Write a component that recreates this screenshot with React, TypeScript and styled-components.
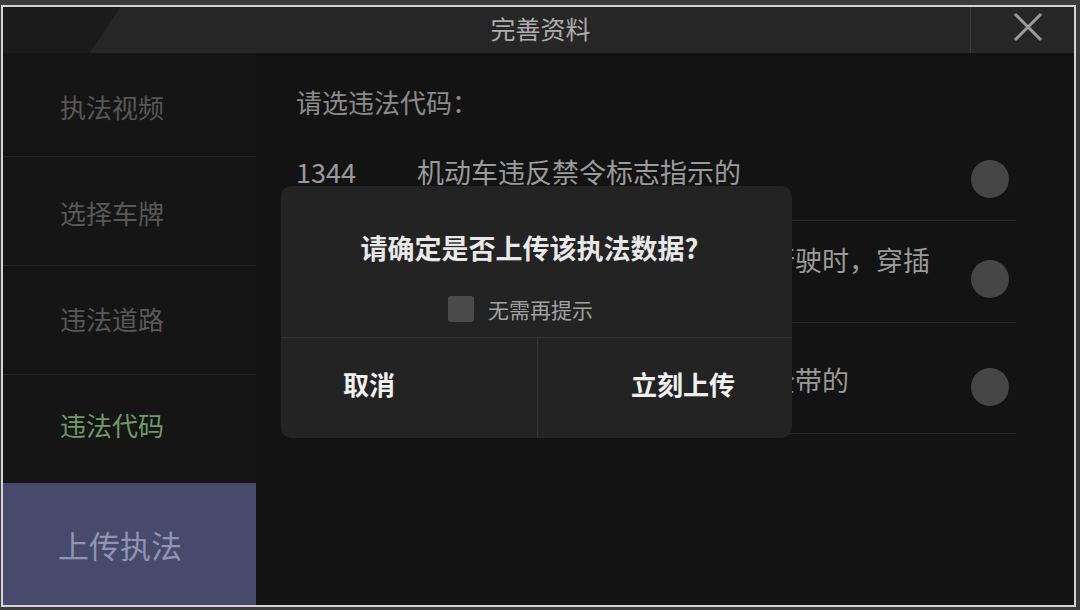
import React from "react";
import styled, { createGlobalStyle } from "styled-components";

const Global = createGlobalStyle`
  html, body { margin: 0; padding: 0; background: #3b3b3b; }
  body { font-family: "Noto Sans CJK SC", "Noto Sans", sans-serif; }
  * { box-sizing: border-box; }
`;

const Frame = styled.div`
  position: relative;
  margin: 5px 0 0 1px;
  width: 1075px;
  height: 602px;
  border: 2px solid #d4d4d4;
  background: #131313;
  display: flex;
  flex-direction: column;
  overflow: hidden;
`;

const Header = styled.header`
  height: 46px;
  flex: none;
  display: grid;
  grid-template-columns: 117px 1fr 104px;
  background: #262626;
`;

const Wedge = styled.div`
  background: #1b1b1b;
  clip-path: polygon(0 0, 100% 0, 74% 100%, 0 100%);
`;

const Title = styled.h1`
  margin: 0;
  padding: 0 9px 4px 0;
  display: flex;
  align-items: center;
  justify-content: center;
  font-size: 25px;
  font-weight: 400;
  color: #acacac;
`;

const Close = styled.button`
  border: 0;
  border-left: 1px solid #3a3a3a;
  background: transparent;
  padding: 0 0 6px 10px;
  display: flex;
  align-items: center;
  justify-content: center;
  cursor: pointer;
`;

const Body = styled.div`
  flex: 1;
  display: flex;
  min-height: 0;
`;

const Sidebar = styled.nav`
  width: 253px;
  flex: none;
  display: flex;
  flex-direction: column;
  background: #151515;
`;

const NavItem = styled.div<{ $h?: number; $active?: boolean; $primary?: boolean; $line?: boolean; $shift?: number }>`
  height: ${(p) => (p.$h ? `${p.$h}px` : "auto")};
  flex: ${(p) => (p.$h ? "none" : "1")};
  display: flex;
  align-items: center;
  padding-left: ${(p) => (p.$primary ? 55 : 57)}px;
  padding-top: ${(p) => Math.max(0, p.$shift ?? 0)}px;
  padding-bottom: ${(p) => Math.max(0, -(p.$shift ?? 0))}px;
  font-size: ${(p) => (p.$primary ? 31 : 26)}px;
  color: ${(p) => (p.$primary ? "#9094b0" : p.$active ? "#6d9a68" : "#585858")};
  background: ${(p) => (p.$primary ? "#474a6b" : "transparent")};
  border-bottom: ${(p) => (p.$line ? "1px solid #262626" : "0")};
`;

const Content = styled.main`
  flex: 1;
  padding: 33px 58px 0 40px;
`;

const Prompt = styled.div`
  font-size: 26px;
  line-height: 32px;
  color: #8a8a8a;
  margin-bottom: 6px;
`;

const Row = styled.div<{ $h: number; $pt: number }>`
  height: ${(p) => p.$h}px;
  display: flex;
  align-items: center;
  padding-top: ${(p) => p.$pt}px;
  border-bottom: 1px solid #2a2a2a;
`;

const Code = styled.div`
  width: 121px;
  flex: none;
  font-size: 27px;
  line-height: 32px;
  color: #9a9a9a;
`;

const Desc = styled.div`
  flex: 1;
  font-size: 27px;
  line-height: 32px;
  color: #9a9a9a;
`;

const Radio = styled.span<{ $dy: number }>`
  width: 38px;
  height: 38px;
  flex: none;
  border-radius: 50%;
  background: #464646;
  margin: ${(p) => p.$dy}px 7px 0 30px;
`;

const Overlay = styled.div`
  position: absolute;
  inset: 0;
  display: flex;
  align-items: center;
  justify-content: center;
  padding: 11px 4px 0 0;
`;

const Dialog = styled.div`
  width: 511px;
  height: 252px;
  border-radius: 10px;
  background: #232323;
  display: flex;
  flex-direction: column;
  overflow: hidden;
`;

const DialogTop = styled.div`
  height: 152px;
  flex: none;
  display: flex;
  flex-direction: column;
  align-items: center;
  padding: 46px 14px 0 0;
  border-bottom: 1px solid #343434;
`;

const DialogTitle = styled.div`
  font-size: 27px;
  line-height: 32px;
  font-weight: 700;
  color: #e8e8e8;
`;

const CheckRow = styled.label`
  margin: 32px 18px 0 0;
  height: 26px;
  display: flex;
  align-items: center;
  gap: 14px;
  font-size: 21px;
  color: #a2a2a2;
`;

const Box = styled.span`
  width: 26px;
  height: 26px;
  border-radius: 3px;
  background: #4b4b4b;
`;

const Actions = styled.div`
  flex: 1;
  display: grid;
  grid-template-columns: 256px 1fr;
`;

const ActionBtn = styled.button<{ $right?: boolean }>`
  border: 0;
  border-left: ${(p) => (p.$right ? "1px solid #343434" : "0")};
  background: transparent;
  display: flex;
  align-items: center;
  justify-content: ${(p) => (p.$right ? "flex-end" : "flex-start")};
  padding: ${(p) => (p.$right ? "0 57px 8px 0" : "0 0 8px 62px")};
  font-family: inherit;
  font-size: 26px;
  font-weight: 700;
  color: #f0f0f0;
  cursor: pointer;
`;

const rows = [
  { h: 97, pt: 0, dy: 14, code: "1344", text: "机动车违反禁令标志指示的" },
  { h: 102, pt: 8, dy: 6, code: "1625", text: "机动车遇前方车辆排队或缓慢行驶时，穿插等候车辆的" },
  { h: 111, pt: 4, dy: 14, code: "6011", text: "驾驶机动车时未按规定使用安全带的" },
];

export default function App() {
  return (
    <>
      <Global />
      <Frame>
        <Header>
          <Wedge />
          <Title>完善资料</Title>
          <Close aria-label="关闭">
            <svg width="30" height="30" viewBox="0 0 30 30">
              <path d="M2 2 L28 28 M28 2 L2 28" stroke="#9c9c9c" strokeWidth="3" fill="none" />
            </svg>
          </Close>
        </Header>
        <Body>
          <Sidebar>
            <NavItem $h={104} $line $shift={3}>执法视频</NavItem>
            <NavItem $h={109} $line $shift={3}>选择车牌</NavItem>
            <NavItem $h={109} $line $shift={-3}>违法道路</NavItem>
            <NavItem $h={108} $active $shift={-10}>违法代码</NavItem>
            <NavItem $primary>上传执法</NavItem>
          </Sidebar>
          <Content>
            <Prompt>请选违法代码：</Prompt>
            {rows.map((r) => (
              <Row key={r.code} $h={r.h} $pt={r.pt}>
                <Code>{r.code}</Code>
                <Desc>{r.text}</Desc>
                <Radio $dy={r.dy} />
              </Row>
            ))}
          </Content>
        </Body>
        <Overlay>
          <Dialog>
            <DialogTop>
              <DialogTitle>请确定是否上传该执法数据?</DialogTitle>
              <CheckRow>
                <Box />
                无需再提示
              </CheckRow>
            </DialogTop>
            <Actions>
              <ActionBtn>取消</ActionBtn>
              <ActionBtn $right>立刻上传</ActionBtn>
            </Actions>
          </Dialog>
        </Overlay>
      </Frame>
    </>
  );
}
